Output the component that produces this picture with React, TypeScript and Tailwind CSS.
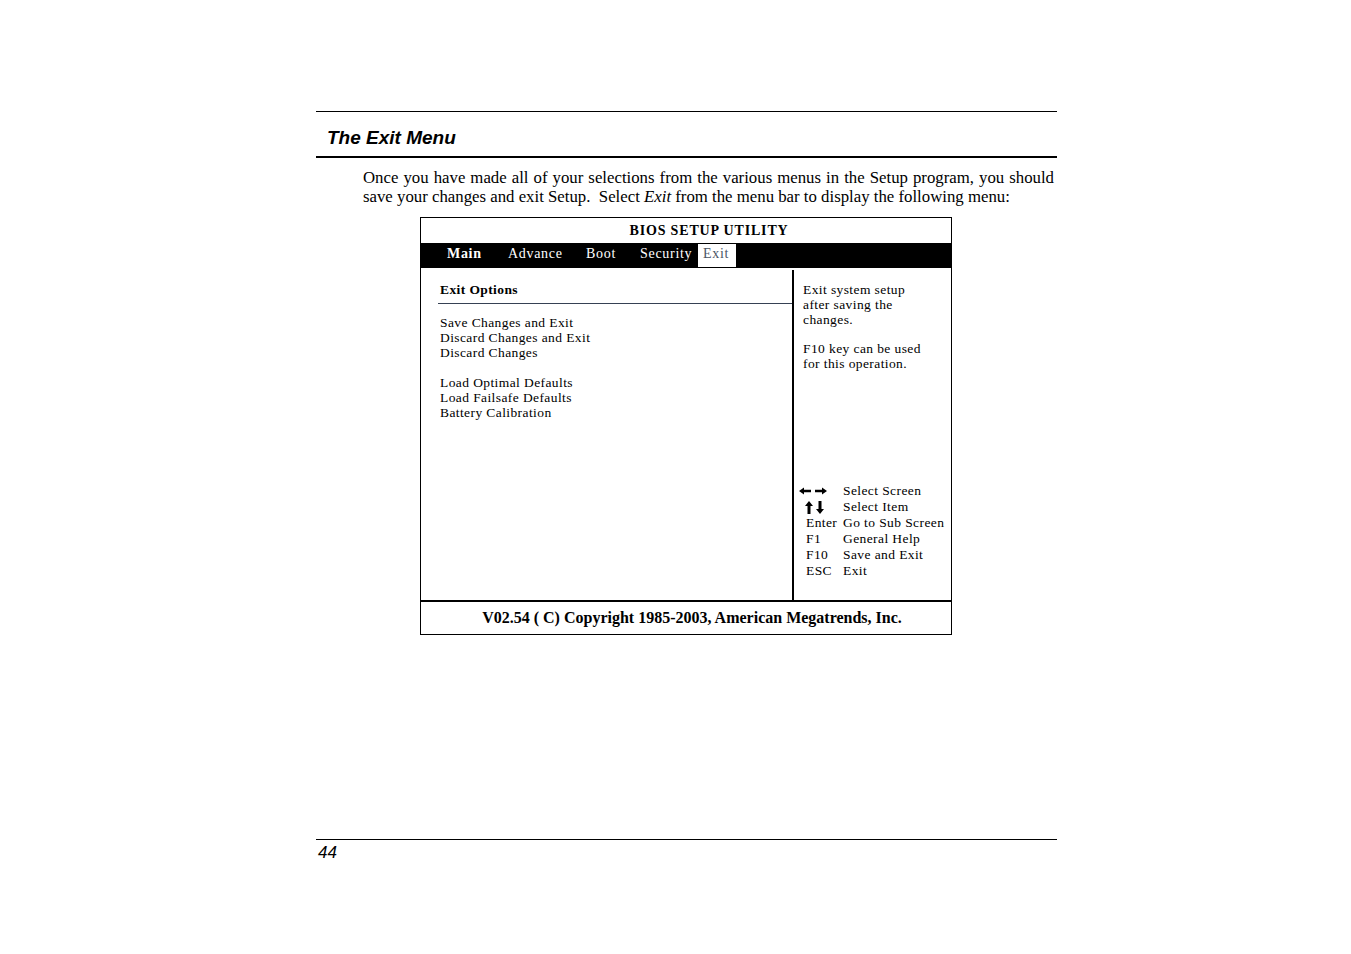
import React from 'react';

const serif = { fontFamily: '"Liberation Serif", "Times New Roman", serif' };

function ArrowsLR() {
  return (
    <svg width="28" height="10" viewBox="0 0 28 10">
      <path d="M0 5 L5 1.5 L5 3.8 L12 3.8 L12 6.2 L5 6.2 L5 8.5 Z" fill="black" />
      <path d="M28 5 L23 1.5 L23 3.8 L16 3.8 L16 6.2 L23 6.2 L23 8.5 Z" fill="black" />
    </svg>
  );
}

function ArrowsUD() {
  return (
    <svg width="22" height="13" viewBox="0 0 22 13">
      <path d="M5 0 L9 5 L6.5 5 L6.5 13 L3.5 13 L3.5 5 L1 5 Z" fill="black" />
      <path d="M16 13 L20 8 L17.5 8 L17.5 0 L14.5 0 L14.5 8 L12 8 Z" fill="black" />
    </svg>
  );
}

const keys: [React.ReactNode, string][] = [
  [<span className="-ml-[7px] flex h-[16px] items-center"><ArrowsLR /></span>, 'Select Screen'],
  [<span className="-ml-[2px] flex h-[16px] items-center"><ArrowsUD /></span>, 'Select Item'],
  ['Enter', 'Go to Sub Screen'],
  ['F1', 'General Help'],
  ['F10', 'Save and Exit'],
  ['ESC', 'Exit'],
];

export default function App() {
  return (
    <div className="relative h-[954px] w-[1351px] bg-white text-black">
      <div className="ml-[316px] w-[741px] pt-[111px]">
        <div className="border-t border-black" />
        <div className="h-[46px] border-b-2 border-black pl-[11px] pt-[15px]">
          <h1
            className="text-[19px] font-bold italic leading-[22px]"
            style={{ fontFamily: '"Liberation Sans", Arial, sans-serif' }}
          >
            The Exit Menu
          </h1>
        </div>

        <p
          className="ml-[47px] mt-[10px] w-[691px] text-justify text-[16.8px] leading-[19px]"
          style={serif}
        >
          Once you have made all of your selections from the various menus in the Setup program, you should
          save your changes and exit Setup.&nbsp; Select <i>Exit</i> from the menu bar to display the following menu:
        </p>

        <div
          className="ml-[104px] mt-[11px] w-[532px] border border-black text-[13.5px] tracking-[0.03em]"
          style={serif}
        >
          <div className="flex h-[25px] items-center justify-center pl-[46px] text-[14px] font-bold tracking-[0.06em]">
            BIOS SETUP UTILITY
          </div>
          <div className="flex h-[25px] items-stretch bg-black pl-[26px] text-[14px] text-white tracking-[0.05em]">
            <div className="flex w-[61px] items-center pb-[4px] font-bold">Main</div>
            <div className="flex w-[78px] items-center pb-[4px]">Advance</div>
            <div className="flex w-[54px] items-center pb-[4px]">Boot</div>
            <div className="flex w-[58px] items-center pb-[4px]">Security</div>
            <div className="my-[1px] flex w-[38px] items-center bg-white pb-[4px] pl-[5px] text-gray-600">Exit</div>
          </div>
          <div className="flex h-[332px]">
            <div className="w-[371px] pt-[14px]">
              <div className="pl-[19px] font-bold leading-[15px]">Exit Options</div>
              <div className="ml-[17px] mt-[6px] border-t border-gray-700" />
              <div className="mt-[11px] pl-[19px] leading-[15px]">
                <div>Save Changes and Exit</div>
                <div>Discard Changes and Exit</div>
                <div>Discard Changes</div>
                <div className="mt-[14.5px]">Load Optimal Defaults</div>
                <div>Load Failsafe Defaults</div>
                <div>Battery Calibration</div>
              </div>
            </div>
            <div className="mt-[2px] flex w-[159px] flex-col border-l-2 border-black pl-[9px]">
              <div className="mt-[12px] leading-[15px]">
                <div>Exit system setup</div>
                <div>after saving the</div>
                <div>changes.</div>
                <div className="mt-[14px]">F10 key can be used</div>
                <div>for this operation.</div>
              </div>
              <div className="mt-[112px] leading-[16px]">
                {keys.map(([k, d], i) => (
                  <div key={i} className="flex">
                    <div className="w-[40px] pl-[3px]">{k}</div>
                    <div className="whitespace-nowrap">{d}</div>
                  </div>
                ))}
              </div>
            </div>
          </div>
          <div className="flex h-[34px] items-center justify-center border-t-2 border-black pl-[12px] text-[16px] font-bold tracking-normal">
            V02.54 ( C) Copyright 1985-2003, American Megatrends, Inc.
          </div>
        </div>

        <div className="mt-[204px] border-t border-black" />
        <div
          className="pl-[2px] pt-[3px] text-[17px] italic leading-[20px]"
          style={{ fontFamily: '"Liberation Sans Narrow", "Liberation Sans", Arial, sans-serif' }}
        >
          44
        </div>
      </div>
    </div>
  );
}
